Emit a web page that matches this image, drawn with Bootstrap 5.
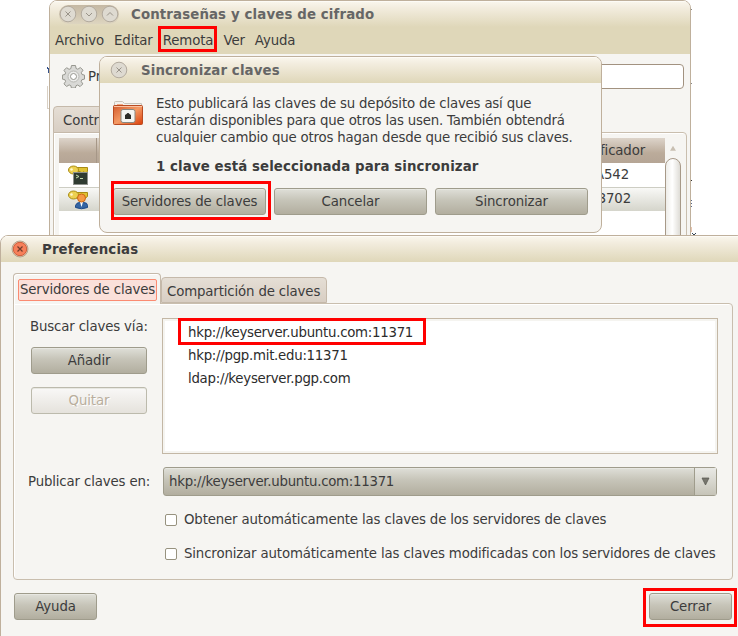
<!DOCTYPE html>
<html lang="es">
<head>
<meta charset="utf-8">
<meta name="viewport" content="width=device-width, initial-scale=1">
<title>Contraseñas y claves de cifrado</title>
<link href="https://cdn.jsdelivr.net/npm/bootstrap@5.3.0/dist/css/bootstrap.min.css" rel="stylesheet">
<style>
body{width:738px;height:636px;overflow:hidden;background:#fff;font-family:"DejaVu Sans",sans-serif;font-size:13.33px;line-height:17px;letter-spacing:-.15px;color:#3c3c3c}
.desk{width:738px;height:636px}
.win{position:absolute;background:#f6f5f2;border:1px solid #bfb09c;border-radius:8px 8px 0 0;overflow:hidden}
.win-keys{left:49px;top:0;width:642px;height:236px}
.win-sync{left:99px;top:56px;width:503px;height:177px;border-radius:8px}
.win-prefs{left:0;top:235px;width:745px;height:410px;border-color:#bfb09c}
.titlebar{height:26px;background:linear-gradient(#faf7ee 0,#f3eddf 25%,#dfd7b9 100%);box-shadow:inset 0 1px #fdfbf6;font-weight:700;color:#666;letter-spacing:.13px}
.win-prefs .titlebar{color:#3c3c3c}
.menubar{height:27px;background:#dfd7b9;padding-left:5px;gap:10px;letter-spacing:-.12px}
.orb{width:18px;height:18px;flex:none}
.orbs{width:60px;height:19px;margin-left:9px;border-radius:10px;background:linear-gradient(#c5b8a3,#ddd5c0)}
.title-text{margin-left:13px;white-space:nowrap}
.orbs + .title-text{margin-left:12px}
.toolbar-g{height:52px;padding:10px 6px 0 12px}
.search{width:200px;height:25px;background:#fff;border:1px solid #a29280;border-radius:4px}
.gbtn{height:27px;padding:0;border:1px solid #9f9c8c;border-radius:3px;background:linear-gradient(#dfdfd8 0,#c6c4b8 45%,#b2ae9f 100%);box-shadow:inset 0 1px #e7e7e1;color:#3c3c3c;font-size:13.33px;letter-spacing:-.12px;line-height:25px;text-align:center;position:relative}
.gbtn-off{border-color:#bcbaac;background:linear-gradient(#f9f8f7,#e5e2dc);color:#b9ae9d;text-shadow:1px 1px #fff}
.ring{position:absolute;border:3px solid #f00}
.ring-menu{left:-5px;top:-6px;width:59px;height:26px}
.ring-servers{left:-3px;top:-8px;width:160px;height:39px}
.ring-url{left:-10px;top:-7px;width:248px;height:27px}
.ring-close{left:-7px;top:-6px;width:94px;height:39px}
.gtab{background:linear-gradient(#e5ded5,#d8cec3);border:1px solid #c5b9aa;border-radius:4px 4px 0 0}
.pane{border:1px solid #c9beae;border-radius:0 4px 4px 4px;box-shadow:inset 1px 1px #fff}
.thead-g{height:25px;background:linear-gradient(#ddd4ca,#bbab9a 60%,#b5a595)}
.thead-first{width:38px;height:25px;border-right:1px solid #a69787}
.row-g{height:24px}
.row-g span,.row-alt span{margin-bottom:2px}
.row-alt{height:24px;border-top:1px solid #cdcdc3;background:linear-gradient(#f8f8f6,#d5d5cb)}
.scroll-thumb{width:16px;height:90px;border:1px solid #a79988;border-radius:8px;background:linear-gradient(90deg,#eeede9,#fff 45%,#dedcd6)}
.keylist{width:556px;height:136px;border:1px solid #c3b7a5;background:#fff;box-shadow:inset 0 0 0 2px #f5f4f0;padding:2px 0 0 25px;color:#2c2c2c;letter-spacing:-.27px}
.keylist div{height:23px;line-height:23px}
.check{width:12px;height:12px;background:#fff;border:1px solid #97927f;border-radius:2px;margin-right:7px}
.drop{width:22px;height:27px;border-left:1px solid #9f9c8c;background:linear-gradient(#e9e9e5,#c6c4b8)}
.combo{width:554px;height:29px;padding-left:5px;letter-spacing:-.27px}
.tab-on{position:relative;z-index:1;width:148px;height:31px;margin-bottom:-1px;border:1px solid #c5b9aa;border-bottom:0;border-radius:4px 4px 0 0;background:#f6f5f2;padding:5px 3px 4px 4px;box-shadow:inset 1px 1px #fff}
.tab-focus{height:22px;border:1px solid #fb8b72;border-radius:2px;background:#fae0da;line-height:19px;white-space:nowrap;padding-left:1px}
.fleck{position:absolute;left:0;top:0}
.sync-msg{margin-left:12px;letter-spacing:-.19px}
.sync-msg strong{margin-top:12px;letter-spacing:.1px}
.nw{white-space:nowrap}
</style>
</head>
<body>
<main class="desk position-relative overflow-hidden">
  <svg class="fleck" width="738" height="236" aria-hidden="true">
    <path d="M47.500 67v2M48.500 68v5" stroke="#34518a"/><path d="M47.500 86v22M47 108.500h3" stroke="#d9d0c4" fill="none"/>
    <path d="M691 9.500h1M691 83.500h1" stroke="#888"/><path d="M691 180.500h1" stroke="#333"/><path d="M691 200.500h1M691 203.500h1M691 206.500h1" stroke="#5b6a88"/><path d="M691 227v5" stroke="#d38a60"/><path d="M692 233l2 2 2-2" stroke="#345" fill="none"/>
  </svg>

  <section class="win win-keys">
    <div class="titlebar d-flex align-items-center">
      <div class="orbs d-flex align-items-center justify-content-between">
        <svg class="orb" viewBox="0 0 18 18"><circle cx="9" cy="9" r="7.800" fill="#dedad1" stroke="#b2aa9e"/><path d="M6.500 6.500l5 5m0-5l-5 5" stroke="#999389"/></svg>
        <svg class="orb" viewBox="0 0 18 18"><circle cx="9" cy="9" r="7.800" fill="#dedad1" stroke="#b2aa9e"/><path d="M6 8l3 3 3-3" stroke="#999389" fill="none"/></svg>
        <svg class="orb" viewBox="0 0 18 18"><circle cx="9" cy="9" r="7.800" fill="#dedad1" stroke="#b2aa9e"/><path d="M6 10.500l3-3 3 3" stroke="#999389" fill="none"/></svg>
      </div>
      <span class="title-text">Contraseñas y claves de cifrado</span>
    </div>
    <nav class="menubar d-flex align-items-center nw">
      <span>Archivo</span><span>Editar</span>
      <span class="position-relative">Remota<i class="ring ring-menu"></i></span>
      <span>Ver</span><span>Ayuda</span>
    </nav>
    <div class="toolbar-g d-flex align-items-start justify-content-between">
      <div class="d-flex">
        <svg width="23" height="24" viewBox="0 0 23 24"><g fill="#d9d9d6" stroke="#96968f"><path d="M9.500 1.500h4l.6 3 1.700.7 2.600-1.700 2.600 2.700-1.700 2.500.7 1.800 2.500.6v4l-2.600.6-.7 1.700 1.600 2.500-2.700 2.700-2.400-1.600-1.700.7-.6 2.300h-4l-.6-2.400-1.700-.7-2.500 1.600-2.600-2.600 1.600-2.500-.7-1.700-2.500-.6v-4l2.500-.6.7-1.700-1.600-2.500 2.600-2.600 2.500 1.600 1.700-.7z"/><circle cx="11.500" cy="12.500" r="5.500" fill="#ececea" stroke="#b8b8b3"/><circle cx="11.500" cy="12.500" r="3" fill="#fff"/></g></svg>
        <span class="mt-1" style="margin-left:3px">Pr</span>
      </div>
      <div class="search"></div>
    </div>
    <div class="d-flex" style="padding-left:3px;height:27px"><div class="gtab" style="width:90px;padding:5px 9px">Contr</div></div>
    <div class="pane d-flex" style="margin:-1px 3px 0 3px;height:120px;padding:5px">
      <div class="flex-grow-1 bg-white">
        <div class="thead-g d-flex justify-content-between align-items-center"><span class="thead-first"></span><span style="margin-right:20px">Identificador</span></div>
        <div class="row-g d-flex justify-content-between align-items-center">
          <svg style="margin-left:9px" width="22" height="22" viewBox="0 0 22 22"><path d="M8 3.500h11.500v4l-2 1.500-1.500-1.500-2 1.500-2-1.500H8z" fill="#dfc233" stroke="#a88b14"/><ellipse cx="5.500" cy="6" rx="5" ry="4" fill="#ecd050" stroke="#a88b14"/><circle cx="3.500" cy="5.500" r="1.300" fill="#fff8d0"/><rect x="5.500" y="8.500" width="14" height="12" fill="#2f3b31" stroke="#8e918c"/><path d="M8 11l3 1.500-3 1.500m4 .5h3" stroke="#c4dcad" fill="none"/></svg>
          <span style="margin-right:36px">0ADBA542</span></div>
        <div class="row-alt d-flex justify-content-between align-items-center">
          <svg style="margin-left:9px" width="22" height="22" viewBox="0 0 22 22"><path d="M8 3.500h11.500v4l-2 1.500H8z" fill="#dfc233" stroke="#a88b14"/><ellipse cx="5.500" cy="6" rx="5" ry="4" fill="#ecd050" stroke="#a88b14"/><circle cx="3.500" cy="5.500" r="1.300" fill="#fff8d0"/><path d="M7.500 18.500v-2q1-3 4-3h4q4 0 4 3v2q-6 2.500-12 0z" fill="#3465a4" stroke="#204a87"/><path d="M12 13h3l-1.500 5z" fill="#fff"/><circle cx="13.500" cy="9" r="4" fill="#f49a45" stroke="#ce6712"/></svg>
          <span style="margin-right:34px">4E0B3702</span></div>
      </div>
      <div class="d-flex flex-column align-items-center" style="width:16px"><svg width="8" height="20" viewBox="0 0 8 20"><path d="M4 8l3 5H1z" fill="#c8bfb2"/></svg><div class="scroll-thumb"></div></div>
    </div>
  </section>

  <section class="win win-sync">
    <div class="titlebar d-flex align-items-center" style="padding-left:10px">
      <svg class="orb" viewBox="0 0 18 18"><circle cx="9" cy="9" r="7.800" fill="#dedad1" stroke="#b2aa9e"/><path d="M6.500 6.500l5 5m0-5l-5 5" stroke="#999389"/></svg>
      <span class="title-text">Sincronizar claves</span>
    </div>
    <div class="d-flex" style="padding:12px 0 0 13px;height:105px">
      <svg width="31" height="32" viewBox="0 0 31 32" style="margin-top:5px"><defs><linearGradient id="fold" x2="1" y2="1"><stop stop-color="#d35b2d"/><stop offset=".5" stop-color="#f49a65"/><stop offset="1" stop-color="#da3e09"/></linearGradient></defs><path d="M1.500 10V2.500q0-1 1-1h7l2 2h17v7" fill="#f3f1ed" stroke="#c9c3ba"/><path d="M4 4.500h6" stroke="#f2a883"/><rect x=".5" y="5.500" width="29" height="19" rx="1" fill="url(#fold)" stroke="#b94b21"/><path d="M1 6.500h28" stroke="#fac2a3"/><rect x="8" y="9.500" width="14" height="13" rx="2" fill="#f4f4f1" stroke="#89877f"/><path d="M12 19v-4l1.500-1 1-1h1l1 1 1.500 1v4z" fill="#2c2c28"/></svg>
      <div class="sync-msg nw"><div>Esto publicará las claves de su depósito de claves así que<br>estarán disponibles para que otros las usen. También obtendrá<br>cualquier cambio que otros hagan desde que recibió sus claves.</div><strong class="d-block">1 clave está seleccionada para sincronizar</strong></div>
    </div>
    <div class="d-flex" style="padding-left:13px">
      <button class="gbtn" style="width:153px">Servidores de claves<i class="ring ring-servers"></i></button>
      <button class="gbtn" style="width:153px;margin-left:8px">Cancelar</button>
      <button class="gbtn" style="width:153px;margin-left:8px">Sincronizar</button>
    </div>
  </section>

  <section class="win win-prefs">
    <div class="titlebar d-flex align-items-center" style="padding-left:10px">
      <svg class="orb" viewBox="0 0 18 18"><circle cx="9" cy="9" r="8" fill="#d9cab5" stroke="#b9a58d"/><circle cx="9" cy="9" r="6.700" fill="#f6805a" stroke="#d05d3a"/><path d="M6.500 6.500l5 5m0-5l-5 5" stroke="#713c2c" stroke-width="1.200"/></svg>
      <span class="title-text">Preferencias</span>
    </div>
    <div class="d-flex align-items-end" style="height:41px;padding-left:12px">
      <div class="tab-on"><div class="tab-focus">Servidores de claves</div></div>
      <div class="gtab nw" style="width:166px;height:26px;padding:5px 0 0 5px">Compartición de claves</div>
    </div>
    <div class="pane" style="width:720px;height:277px;margin-left:12px;padding:14px 0 0 16px">
      <div class="d-flex">
        <div class="d-flex flex-column" style="width:132px"><span class="nw">Buscar claves vía:</span>
          <button class="gbtn" style="width:116px;margin-top:12px;margin-left:1px">Añadir</button>
          <button class="gbtn gbtn-off" style="width:116px;margin-top:13px;margin-left:1px">Quitar</button></div>
        <div class="keylist"><div><span class="position-relative">hkp://keyserver.ubuntu.com:11371<i class="ring ring-url"></i></span></div><div>hkp://pgp.mit.edu:11371</div><div>ldap://keyserver.pgp.com</div></div>
      </div>
      <div class="d-flex align-items-center nw" style="margin:13px 0 0 -2px"><span style="width:135px">Publicar claves en:</span>
        <div class="gbtn combo d-flex justify-content-between align-items-center"><span>hkp://keyserver.ubuntu.com:11371</span><span class="drop d-flex align-items-center justify-content-center"><svg width="9" height="9" viewBox="0 0 9 9"><path d="M1 1h7L4.500 8z" fill="#77766e" stroke="#55544e" stroke-width=".7"/></svg></span></div></div>
      <div class="d-flex align-items-center nw" style="margin:15px 0 0 135px"><i class="check"></i><span>Obtener automáticamente las claves de los servidores de claves</span></div>
      <div class="d-flex align-items-center nw" style="margin:17px 0 0 135px"><i class="check"></i><span>Sincronizar automáticamente las claves modificadas con los servidores de claves</span></div>
    </div>
    <div class="d-flex justify-content-between" style="padding:13px 12px 0 13px">
      <button class="gbtn" style="width:83px">Ayuda</button>
      <button class="gbtn" style="width:83px">Cerrar<i class="ring ring-close"></i></button>
    </div>
  </section>
</main>
<script src="https://cdn.jsdelivr.net/npm/bootstrap@5.3.0/dist/js/bootstrap.bundle.min.js"></script>
</body>
</html>
